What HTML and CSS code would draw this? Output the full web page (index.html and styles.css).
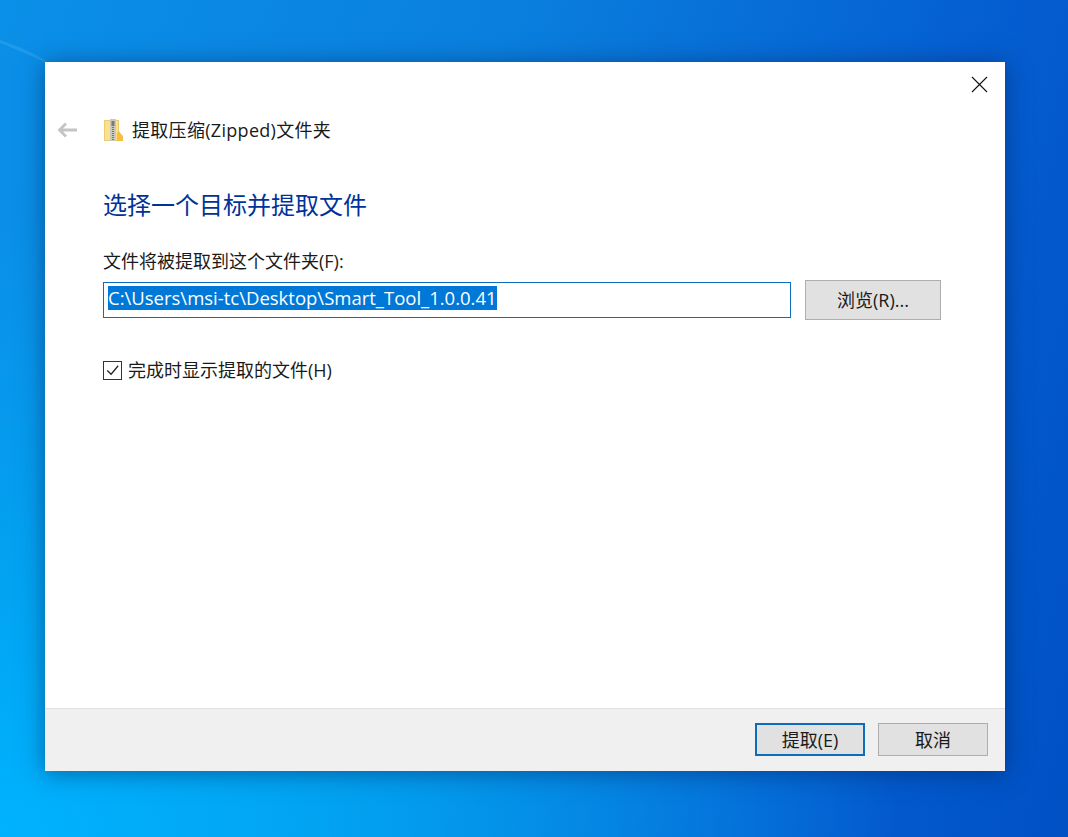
FILE: index.html
```html
<!DOCTYPE html>
<html lang="zh-CN">
<head>
<meta charset="utf-8">
<title>提取压缩(Zipped)文件夹</title>
<link rel="stylesheet" href="styles.css">
</head>
<body>
<div class="desktop">
  <svg class="streak" width="1068" height="837" viewBox="0 0 1068 837" aria-hidden="true">
    <path d="M0 40 C15 45 30 51 45 60 L45 62 C30 55 15 49 0 43Z" fill="#5cc0f5" opacity=".25"/>
  </svg>
  <main class="dialog">
    <div class="content">
      <div class="titlebar">
        <svg class="close" width="17" height="17" viewBox="0 0 17 17"><path d="M1 1 L16 16 M16 1 L1 16" stroke="#111" stroke-width="1.1" fill="none"/></svg>
      </div>
      <div class="navbar">
        <svg class="back" width="21" height="16" viewBox="0 0 21 16"><path d="M9 1.5 L2.5 8 L9 14.5 M3 8 H20" stroke="#c4c4c4" stroke-width="2.8" fill="none"/></svg>
        <svg class="zip" width="19" height="23" viewBox="0 0 19 23">
          <rect x="0" y="1" width="15" height="21" fill="#fde08c"/>
          <rect x=".5" y="1.5" width="14" height="20" fill="none" stroke="#eccb78" stroke-width="1"/>
          <rect x="6" y="0" width="6" height="22" fill="#c9c9bc"/>
          <rect x="7.5" y="2" width="3" height="5" fill="#7a7a76"/>
          <path d="M9 8 V21" stroke="#77776f" stroke-width="2" stroke-dasharray="1 1"/>
          <path d="M13 22 V14 L15 12 L17 15 L19 17 V22Z" fill="#f5c040"/>
        </svg>
        <span class="navtitle">提取压缩(Zipped)文件夹</span>
      </div>
      <h1 class="heading">选择一个目标并提取文件</h1>
      <label class="field-label">文件将被提取到这个文件夹(F):</label>
      <div class="path-row">
        <div class="path-input"><span class="selected">C:\Users\msi-tc\Desktop\Smart_Tool_1.0.0.41</span></div>
        <button class="btn browse" type="button">浏览(R)...</button>
      </div>
      <div class="check-row">
        <span class="checkbox"><svg width="18" height="18" viewBox="0 0 18 18"><path d="M3.5 9.5 L7.5 13.5 L15 4.5" stroke="#222" stroke-width="1.3" fill="none"/></svg></span>
        <span class="check-label">完成时显示提取的文件(H)</span>
      </div>
    </div>
    <footer class="footer">
      <button class="btn action primary" type="button">提取(E)</button>
      <button class="btn action" type="button">取消</button>
    </footer>
  </main>
</div>
</body>
</html>
```

FILE: styles.css
```css
* { box-sizing: border-box; }
html, body { margin: 0; height: 100%; }
body { font-family: "Open Sans", "Noto Sans CJK SC", sans-serif; overflow: hidden; }

.desktop {
  position: relative;
  width: 1068px;
  height: 837px;
  padding: 62px 63px 66px 45px;
  background:
    radial-gradient(900px 620px at 0 830px, #00b2ff 0%, rgba(0, 170, 245, .85) 35%, rgba(0, 140, 230, 0) 100%),
    linear-gradient(105deg, #0a90e8 0%, #0a7fde 40%, #0560d2 75%, #0050c4 100%);
}
.streak { position: absolute; left: 0; top: 0; }

.dialog {
  position: relative;
  width: 960px;
  height: 709px;
  display: flex;
  flex-direction: column;
  background: #fff;
  box-shadow: 0 2px 22px rgba(0, 30, 80, .5);
}
.content { flex: 1; padding: 0 64px 0 58px; display: flex; flex-direction: column; }

.titlebar { height: 31px; display: flex; justify-content: flex-end; align-items: flex-end; margin-right: -47px; }
.close { display: block; }

.navbar { height: 50px; margin-top: 12px; margin-left: -45px; padding-left: 0; display: flex; align-items: center; }
.back { margin-right: 26px; margin-left: -1px; }
.zip { margin-right: 9px; }
.navtitle { font-size: 18px; line-height: 24px; letter-spacing: .3px; color: #1a1a1a; }

.heading {
  margin: 29px 0 0;
  font-size: 24px;
  line-height: 42px;
  font-weight: 400;
  color: #003399;
}
.field-label { display: block; margin-top: 23px; font-size: 18px; line-height: 24px; color: #1a1a1a; }

.path-row { display: flex; gap: 14px; align-items: center; margin-top: 7px; width: 838px; }
.path-input {
  flex: 0 0 688px;
  height: 36px;
  border: 1px solid #0f6cbd;
  padding: 1px 4px 5px;
  display: flex;
  align-items: center;
  background: #fff;
}
.selected { background: #0078d7; color: #fff; font-size: 18.5px; line-height: 24px; white-space: nowrap; }

.btn {
  font-family: inherit;
  font-size: 18px;
  color: #1a1a1a;
  background: #e1e1e1;
  border: 1px solid #adadad;
  padding: 0 0 2px;
}
.browse { flex: 0 0 136px; height: 40px; }

.check-row { display: flex; align-items: center; gap: 6px; margin-top: 38px; }
.checkbox { width: 19px; height: 19px; border: 1px solid #333; display: flex; align-items: center; justify-content: center; background: #fff; }
.check-label { font-size: 18px; line-height: 24px; color: #1a1a1a; }

.footer {
  height: 63px;
  flex: none;
  background: #f0f0f0;
  border-top: 1px solid #dfdfdf;
  display: flex;
  justify-content: flex-end;
  gap: 13px;
  padding: 14px 17px 0 0;
}
.action { width: 110px; height: 33px; }
.primary { border: 2px solid #0f6cbd; }
```
